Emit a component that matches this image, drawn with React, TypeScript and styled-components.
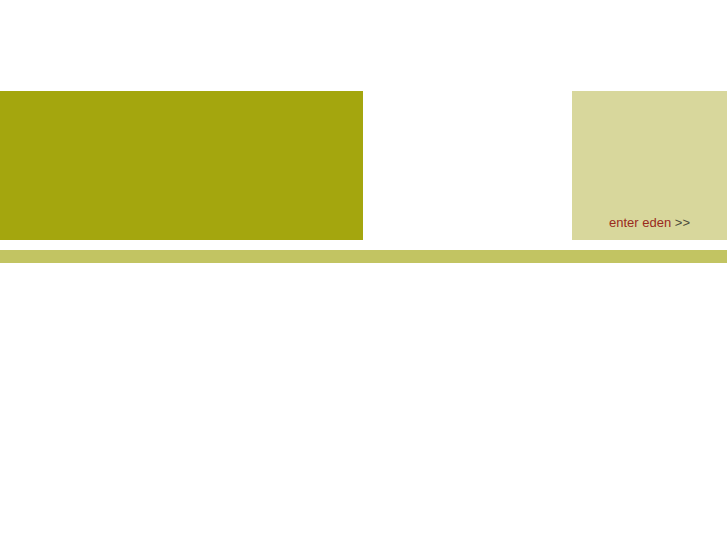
import React from 'react';
import styled, { createGlobalStyle } from 'styled-components';

const GlobalStyle = createGlobalStyle`
  html, body {
    margin: 0;
    padding: 0;
    background-color: #ffffff;
    font-family: 'Liberation Sans', Arial, sans-serif;
  }
`;

const Page = styled.div`
  width: 727px;
  padding-top: 91px;
`;

const Banner = styled.div`
  display: flex;
  height: 149px;
`;

const Block = styled.div<{ $width: number; $color: string }>`
  width: ${p => p.$width}px;
  flex-shrink: 0;
  background-color: ${p => p.$color};
`;

const Spacer = styled.div`
  flex: 1;
`;

const EnterPanel = styled.div`
  width: 155px;
  flex-shrink: 0;
  background-color: #d8d79c;
  display: flex;
  align-items: flex-end;
  justify-content: center;
  padding-bottom: 10px;
  box-sizing: border-box;
`;

const EnterLink = styled.a`
  font-size: 13px;
  line-height: 15px;
  color: #9a2a1c;
  text-decoration: none;
  cursor: pointer;
`;

const Arrows = styled.span`
  color: #4a4a3a;
`;

const Stripe = styled.div`
  margin-top: 10px;
  height: 13px;
  background-color: #c2c462;
`;

const App: React.FC = () => {
  return (
    <>
      <GlobalStyle />
      <Page>
        <Banner>
          <Block $width={363} $color="#a4a60e" />
          <Spacer />
          <EnterPanel>
            <EnterLink>
              enter eden <Arrows>&gt;&gt;</Arrows>
            </EnterLink>
          </EnterPanel>
        </Banner>
        <Stripe />
      </Page>
    </>
  );
};

export default App;
